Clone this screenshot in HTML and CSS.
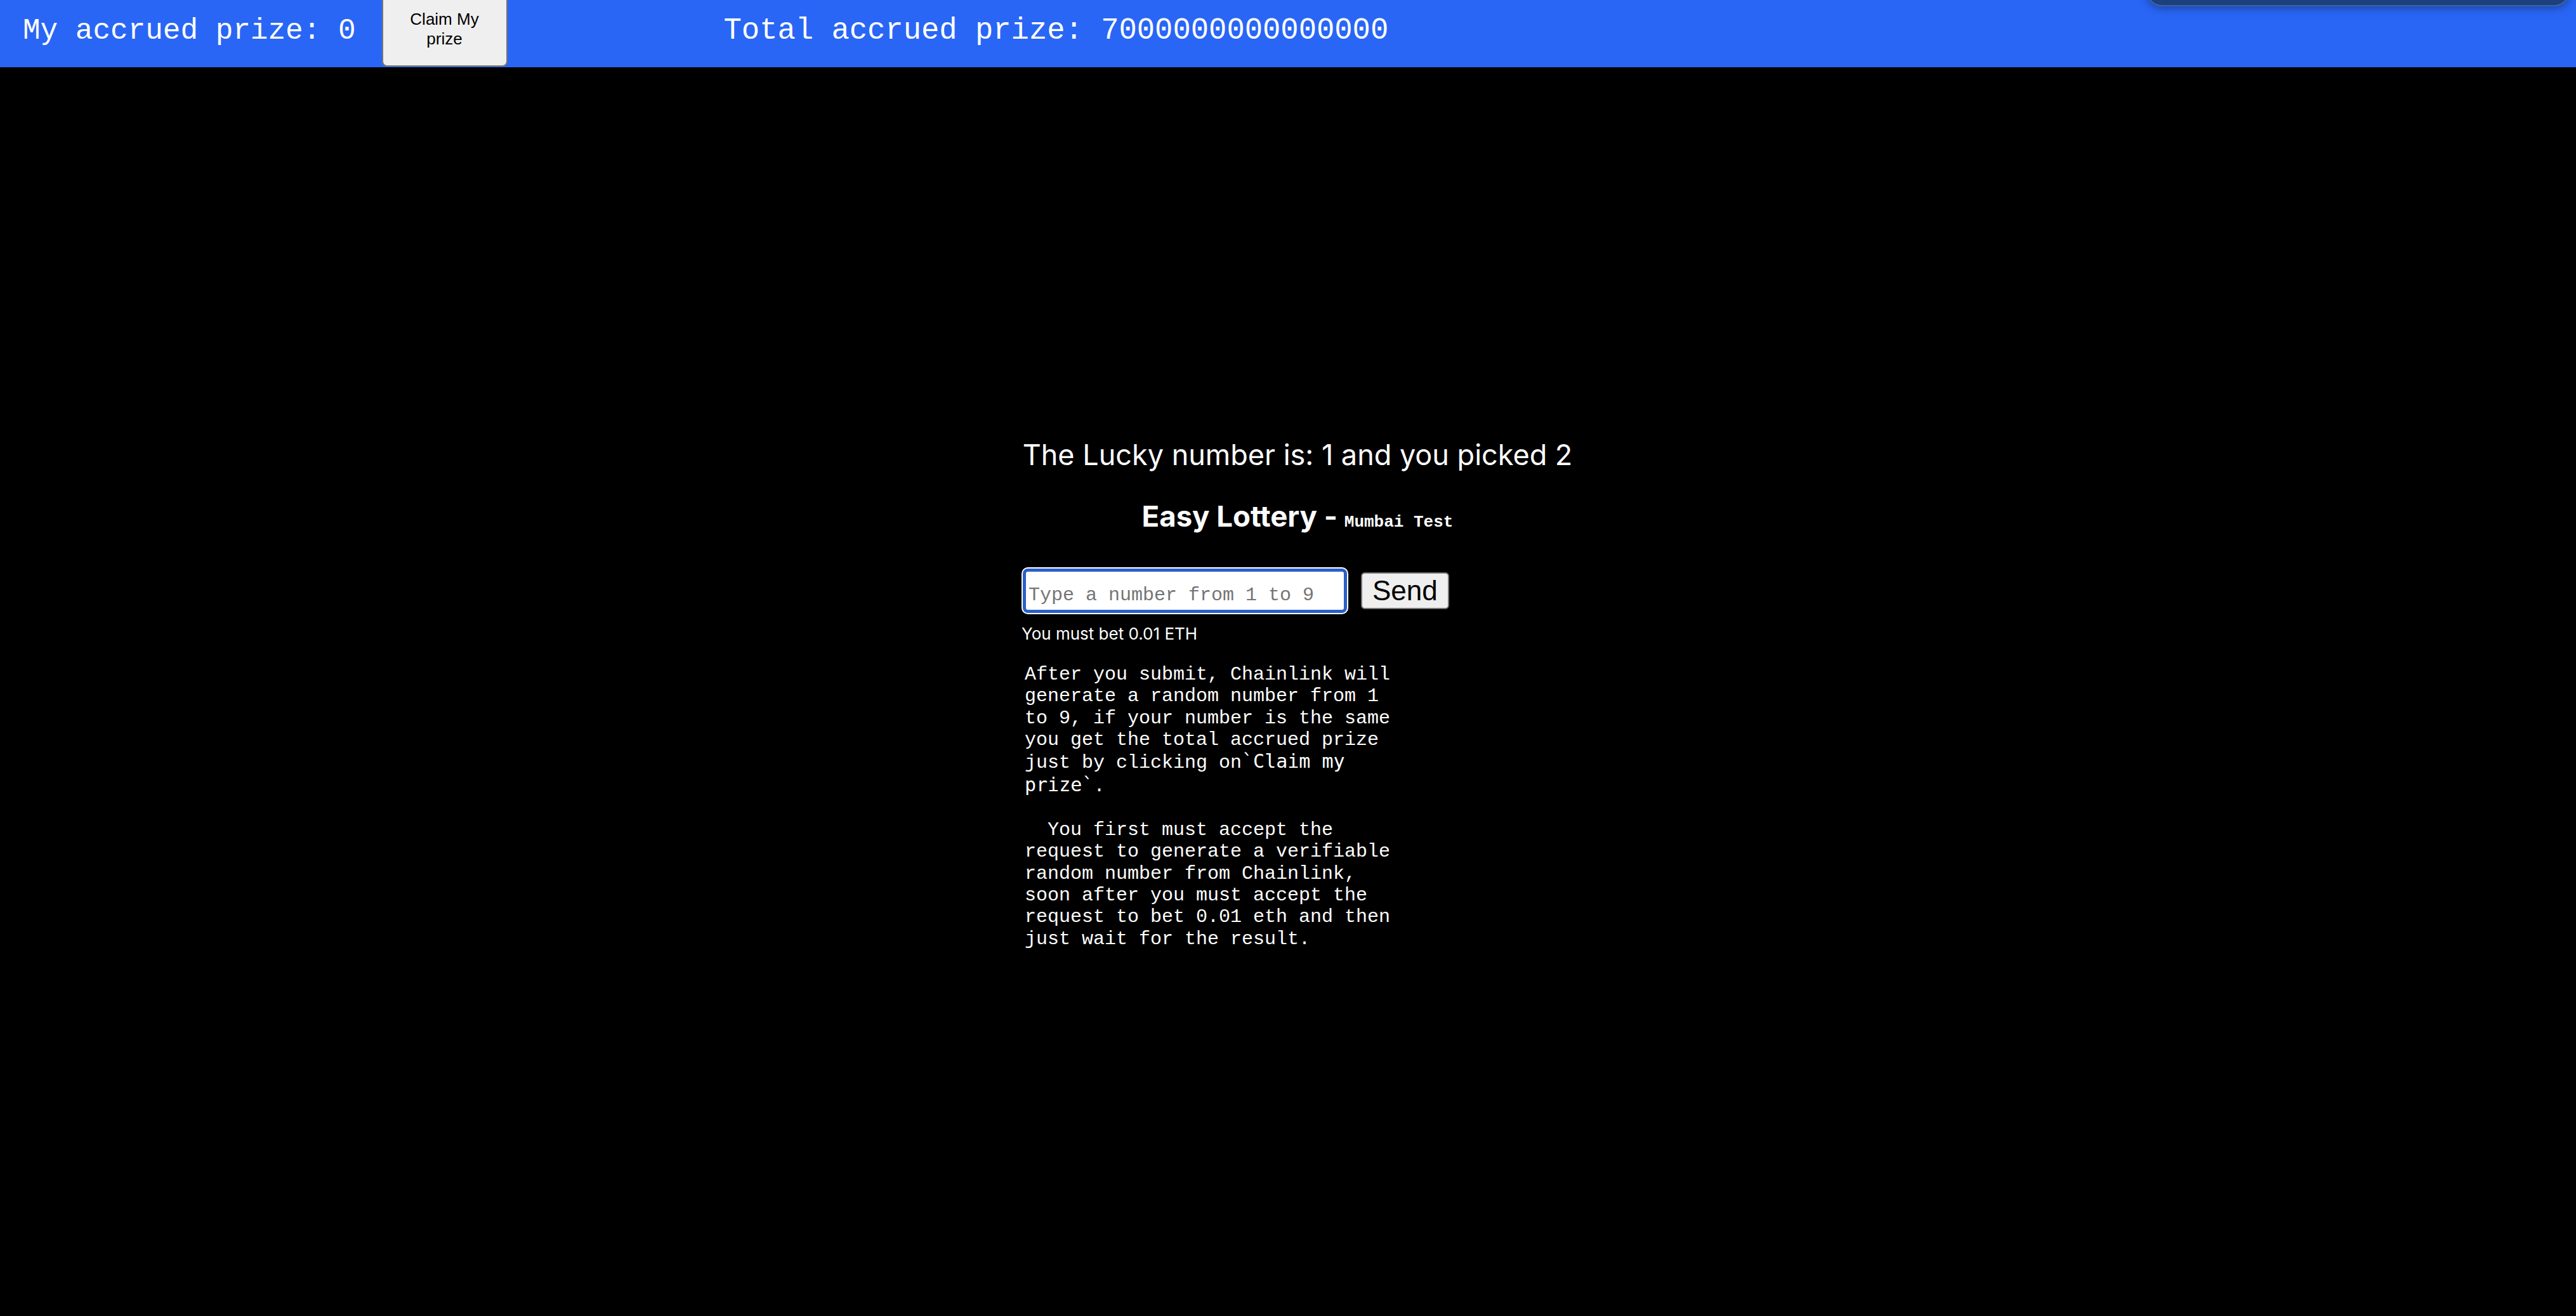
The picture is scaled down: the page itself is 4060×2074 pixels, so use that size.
FILE: index.html
```html
<!DOCTYPE html>
<html lang="en">
<head>
<meta charset="utf-8">
<title>Easy Lottery</title>
<link rel="stylesheet" href="styles.css">
</head>
<body>
<header class="topbar">
  <span class="mine">My accrued prize: 0</span>
  <button class="claim" type="button">Claim My prize</button>
  <span class="total">Total accrued prize: 7000000000000000</span>
  <div class="toast"></div>
</header>
<main class="stage">
  <div class="panel">
    <p class="lucky">The Lucky number is: 1 and you picked 2</p>
    <h2 class="title">Easy Lottery - <small class="net">Mumbai Test</small></h2>
    <form class="bet">
      <input class="num" type="text" placeholder="Type a number from 1 to 9">
      <button class="send" type="button">Send</button>
    </form>
    <p class="hint">You must bet 0.01 ETH</p>
<pre class="rules">After you submit, Chainlink will
generate a random number from 1
to 9, if your number is the same
you get the total accrued prize
just by clicking on<span class="code">`Claim my
prize`</span>.

  You first must accept the
request to generate a verifiable
random number from Chainlink,
soon after you must accept the
request to bet 0.01 eth and then
just wait for the result.</pre>
  </div>
</main>
</body>
</html>
```

FILE: styles.css
```css
* { box-sizing: border-box; }
html, body { margin: 0; }
body {
  background: #000;
  color: #fff;
  font-family: Inter, "Noto Sans", sans-serif;
  overflow: hidden;
}
.topbar {
  position: relative;
  height: 106px;
  background: #2966f5;
  display: flex;
  align-items: flex-start;
}
.mine, .total {
  font-family: "Liberation Mono", monospace;
  font-size: 47.2px;
  line-height: normal;
  color: #fff;
  margin-top: 22px;
  white-space: pre;
}
.mine { margin-left: 36px; font-size: 46px; margin-top: 23px; }
.claim {
  margin-left: 41px;
  margin-top: -13px;
  width: 198px;
  height: 118px;
  padding: 0 16px;
  font-family: "Liberation Sans", Arial, sans-serif;
  font-size: 26px;
  line-height: normal;
  color: #000;
  background: #efefef;
  border: 2px solid #767676;
  border-radius: 8px;
}
.total { margin-left: 341px; }
.toast {
  position: absolute;
  top: -190px;
  right: 9px;
  width: 669px;
  height: 200px;
  border-radius: 26px;
  background: #1c3f7e;
  border: 2px solid #40639f;
  box-shadow: 0 3px 14px rgba(0, 0, 0, .35);
}
.stage {
  height: calc(100vh - 106px);
  display: flex;
  align-items: center;
  justify-content: center;
  padding-left: 30px;
  padding-top: 6px;
}
.panel {
  width: 870px;
  display: flex;
  flex-direction: column;
  align-items: flex-start;
}
.lucky {
  margin: 0;
  width: 100%;
  text-align: center;
  font-size: 45px;
  line-height: normal;
}
.title {
  margin: 42px 0 0;
  width: 100%;
  text-align: center;
  font-size: 45.5px;
  font-weight: 700;
  line-height: normal;
}
.net {
  font-family: "Liberation Mono", monospace;
  font-size: 26px;
  font-weight: 700;
}
.bet {
  margin-top: 53px;
  display: flex;
  align-items: center;
}
.num {
  width: 511px;
  height: 70px;
  margin: 2px;
  padding: 14px 4px 0;
  border: 5px solid #2a5fc9;
  border-radius: 8px;
  box-shadow: 0 0 0 2px #fff;
  outline: none;
  background: #fff;
  font-family: "Liberation Mono", monospace;
  font-size: 30px;
  color: #000;
}
.num::placeholder { color: #757575; }
.send {
  margin-left: 20px;
  padding: 2px 16px;
  font-family: "Liberation Sans", Arial, sans-serif;
  font-size: 44px;
  line-height: normal;
  color: #000;
  background: #efefef;
  border: 2px solid #767676;
  border-radius: 6px;
}
.hint {
  margin: 15px 0 0;
  font-size: 26px;
  line-height: normal;
}
.rules {
  margin: 32px 0 0 5px;
  font-family: "Liberation Mono", monospace;
  font-size: 30px;
  line-height: 34.4px;
  white-space: pre;
  color: #fff;
}
.code {
  font-family: "DejaVu Sans Mono", monospace;
  font-size: 30px;
}
```
